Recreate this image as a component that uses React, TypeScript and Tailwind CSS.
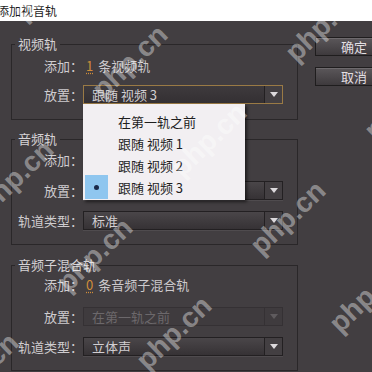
import clsx from 'clsx';

interface SelectProps {
  value: string;
  focused?: boolean;
  disabled?: boolean;
}

const Arrow = ({ dim }: { dim?: boolean }) => (
  <svg width="8" height="5" viewBox="0 0 8 5">
    <path d="M0 0h8L4 5z" fill={dim ? '#5f5b5e' : '#dcd9dc'} />
  </svg>
);

const Select = ({ value, focused, disabled }: SelectProps) => (
  <div
    className={clsx(
      'flex h-[19px] w-[200px] items-stretch border',
      focused && 'border-[#9a7a45] bg-linear-to-b from-[#3e3a3d] to-[#343033]',
      disabled && 'border-[#353134] bg-[#3f3b3e]',
      !focused && !disabled && 'border-[#232022] bg-linear-to-b from-[#4a4649] to-[#363235] shadow-[0_1px_0_rgba(255,255,255,0.07)]'
    )}
  >
    <span
      className={clsx(
        'flex-1 truncate pl-[8px] text-[13px] leading-[17px]',
        disabled ? 'text-[#6c686b]' : 'text-[#d2cfd2]'
      )}
    >
      {value}
    </span>
    <span
      className={clsx(
        'flex w-[18px] items-center justify-center border-l',
        disabled ? 'border-[#353134]' : 'border-[#232022] bg-[#433f42]'
      )}
    >
      <Arrow dim={disabled} />
    </span>
  </div>
);

const Label = ({ text }: { text: string }) => (
  <span className="w-[71px] shrink-0 text-right text-[13px] text-[#cfcccf]">{text}</span>
);

const AddRow = ({ count, unit }: { count: string; unit: string }) => (
  <div className="flex h-[20px] items-center">
    <Label text="添加：" />
    <span className="ml-[3px] text-[13px] text-[#d08d3a] underline decoration-dotted underline-offset-2">{count}</span>
    <span className="ml-[5px] text-[13px] text-[#cdcacd]">{unit}</span>
  </div>
);

const Group = ({ title, className, children }: { title: string; className?: string; children: React.ReactNode }) => (
  <div className={clsx('relative w-[287px] border border-[#2a2729]', className)}>
    <span className="absolute left-[3px] top-[-10px] bg-[#423e41] px-[3px] text-[13px] leading-[18px] text-[#d6d3d6]">
      {title}
    </span>
    {children}
  </div>
);

const menuItems = ['在第一轨之前', '跟随 视频 1', '跟随 视频 2', '跟随 视频 3'];

const Menu = () => (
  <div className="absolute left-0 top-full z-10 w-[162px] bg-[#f2eff2] pb-[2px] pt-[6px] shadow-[2px_2px_3px_rgba(0,0,0,0.55)]">
    {menuItems.map((item, i) => (
      <div key={item} className="flex h-[22px] items-center">
        <span className="flex w-[35px] shrink-0 items-center">
          {i === 3 && (
            <span className="ml-[2px] flex h-[24px] w-[23px] items-center justify-center bg-[#8fc6ef]">
              <span className="h-[5px] w-[5px] rounded-full bg-[#1b2a4a]" />
            </span>
          )}
        </span>
        <span className="text-[13px] text-[#1e1e1e]">{item}</span>
      </div>
    ))}
  </div>
);

const Button = ({ text, className }: { text: string; className?: string }) => (
  <div
    className={clsx(
      'flex h-[19px] w-[78px] items-center justify-center border border-[#1f1d1e] bg-linear-to-b from-[#5b575a] to-[#3e3a3d] text-[13px] text-[#e2dfe2] shadow-[inset_0_1px_0_rgba(255,255,255,0.12)]',
      className
    )}
  >
    {text}
  </div>
);

// watermark tiles of the source picture
const marks: { x: number; y: number }[] = [];
for (let i = -1; i <= 4; i++) {
  for (let j = -2; j <= 1; j++) {
    const x = 130 + i * 79 + j * 193;
    const y = 62 + i * 78 - j * 37;
    if (x > -60 && x < 430 && y > -50 && y < 420) marks.push({ x, y });
  }
}

export default function App() {
  return (
    <div className="relative h-[372px] w-[372px] overflow-hidden bg-[#423e41] font-['Noto_Sans_CJK_SC',sans-serif]">
      <div className="flex h-[21px] items-center bg-white">
        <span className="ml-[-3px] text-[12px] text-[#1a1a1a]">添加视音轨</span>
      </div>

      <div className="flex pl-[11px] pt-[23px]">
        <div className="shrink-0">
          <Group title="视频轨" className="pb-[14px] pt-[11px]">
            <AddRow count="1" unit="条视频轨" />
            <div className="mt-[9px] flex items-center">
              <Label text="放置：" />
              <div className="relative">
                <Select value="跟随 视频 3" focused />
                <Menu />
              </div>
            </div>
          </Group>

          <Group title="音频轨" className="mt-[19px] pb-[13px] pt-[10px]">
            <AddRow count="1" unit="条音频轨" />
            <div className="mt-[11px] flex items-center">
              <Label text="放置：" />
              <Select value="跟随 音频 1" />
            </div>
            <div className="mt-[11px] flex items-center">
              <Label text="轨道类型：" />
              <Select value="标准" />
            </div>
          </Group>

          <Group title="音频子混合轨" className="mt-[20px] pb-[13px] pt-[9px]">
            <AddRow count="0" unit="条音频子混合轨" />
            <div className="mt-[12px] flex items-center">
              <Label text="放置：" />
              <Select value="在第一轨之前" disabled />
            </div>
            <div className="mt-[11px] flex items-center">
              <Label text="轨道类型：" />
              <Select value="立体声" />
            </div>
          </Group>
        </div>

        <div className="-mt-[7px] ml-[17px] shrink-0">
          <Button text="确定" />
          <Button text="取消" className="mt-[11px]" />
        </div>
      </div>

      <div className="pointer-events-none absolute inset-0 z-20">
        {marks.map((m) => (
          <span
            key={`${m.x}-${m.y}`}
            className="absolute -translate-x-1/2 -translate-y-1/2 -rotate-44 whitespace-nowrap font-['Liberation_Sans',sans-serif] text-[28px] font-bold text-white/40"
            style={{ left: m.x, top: m.y }}
          >
            php.cn
          </span>
        ))}
      </div>
    </div>
  );
}
